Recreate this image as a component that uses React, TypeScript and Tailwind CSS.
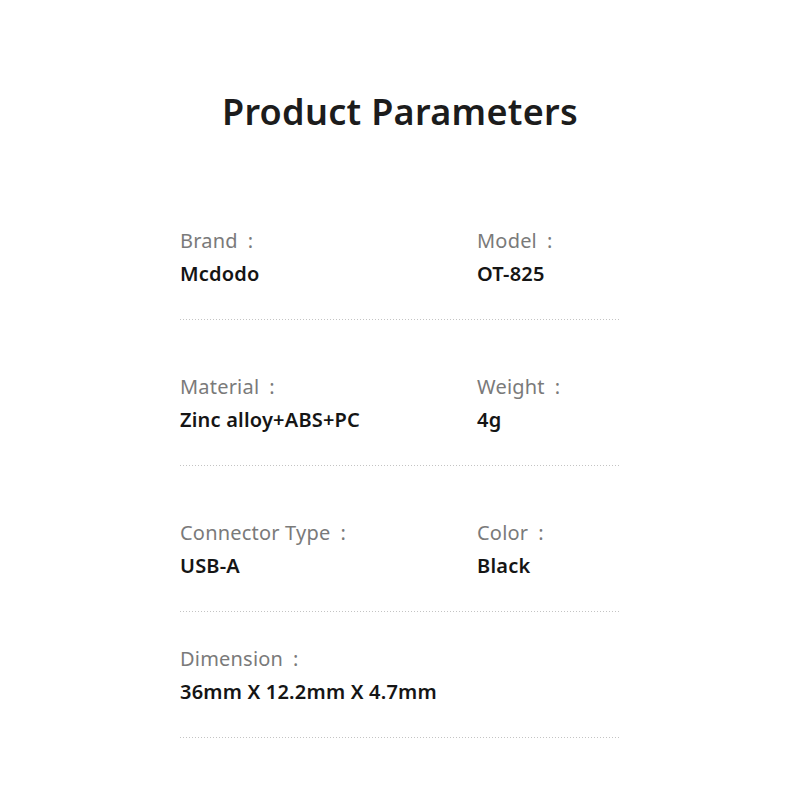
import React from 'react';

type Param = { label: string; value: string };

const rows: Param[][] = [
  [
    { label: 'Brand', value: 'Mcdodo' },
    { label: 'Model', value: 'OT-825' },
  ],
  [
    { label: 'Material', value: 'Zinc alloy+ABS+PC' },
    { label: 'Weight', value: '4g' },
  ],
  [
    { label: 'Connector Type', value: 'USB-A' },
    { label: 'Color', value: 'Black' },
  ],
  [{ label: 'Dimension', value: '36mm X 12.2mm X 4.7mm' }],
];

function Cell({ item }: { item: Param }) {
  return (
    <div className="flex flex-col">
      <div className="text-[20px] leading-[24px] text-[#7a7a7a] tracking-[0.2px]">
        {item.label}
        <span className="ml-[10px]">:</span>
      </div>
      <div className="mt-[9px] text-[20px] leading-[24px] font-semibold text-[#151515] tracking-[0.2px]">
        {item.value}
      </div>
    </div>
  );
}

function Dots() {
  return (
    <div className="h-px w-full bg-[linear-gradient(to_right,#c4c4c4_1px,transparent_1px)] bg-[length:3px_1px]" />
  );
}

export default function App() {
  return (
    <div
      className="w-[800px] h-[800px] bg-white flex flex-col items-center"
      style={{ fontFamily: '"Noto Sans", "Open Sans", sans-serif' }}
    >
      <h1 className="mt-[87px] text-[36px] leading-[50px] font-semibold text-[#1c1c1c] tracking-[0.3px]">
        Product Parameters
      </h1>

      <div className="mt-[92px] w-[440px] flex flex-col">
        {rows.map((row, i) => (
          <div key={i} className={i === 0 ? '' : i === 3 ? 'pt-[35px]' : 'pt-[55px]'}>
            <div className="grid grid-cols-[297px_1fr]">
              {row.map((item) => (
                <Cell key={item.label} item={item} />
              ))}
            </div>
            <div className="mt-[33px]">
              <Dots />
            </div>
          </div>
        ))}
      </div>
    </div>
  );
}
